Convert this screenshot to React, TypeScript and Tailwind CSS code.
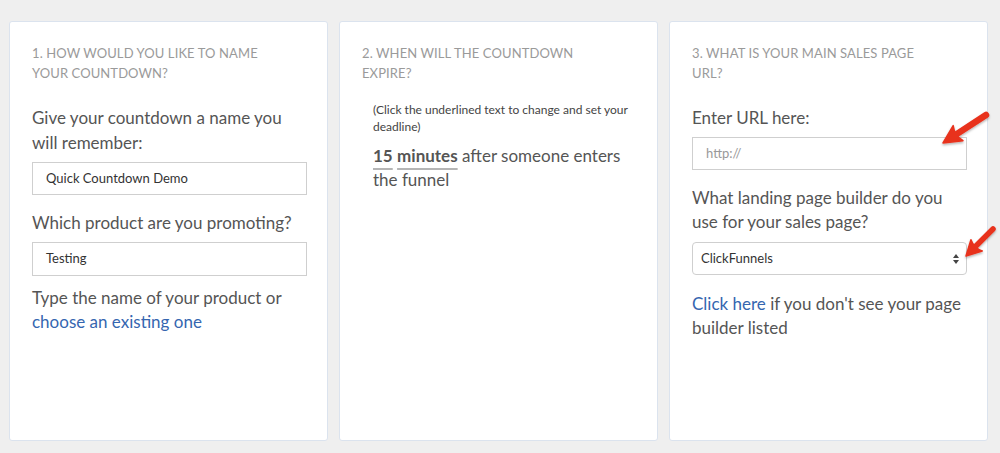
import React from "react";

function arrowShapes(tx: number, ty: number, px: number, py: number, w: number, hl: number, hw: number) {
  const dx = px - tx;
  const dy = py - ty;
  const len = Math.sqrt(dx * dx + dy * dy);
  const ux = dx / len;
  const uy = dy / len;
  const nx = -uy;
  const ny = ux;
  const bx = px - ux * hl;
  const by = py - uy * hl;
  const cx = px - ux * hl * 0.75;
  const cy = py - uy * hl * 0.75;
  const head = `M${px},${py} L${bx + (nx * hw) / 2},${by + (ny * hw) / 2} Q${cx},${cy} ${bx - (nx * hw) / 2},${by - (ny * hw) / 2} Z`;
  const shaft = `M${tx},${ty} L${cx},${cy}`;
  return { head, shaft, w };
}

function Arrows() {
  const a1 = arrowShapes(986, 115, 943, 143, 6.5, 18, 18);
  const a2 = arrowShapes(993, 229, 966, 256, 5.5, 15, 16);
  return (
    <svg className="absolute left-0 top-0 pointer-events-none" width="1000" height="453" viewBox="0 0 1000 453">
      <defs>
        <filter id="sh" x="-20%" y="-20%" width="140%" height="160%">
          <feDropShadow dx="0" dy="1.5" stdDeviation="1.2" floodColor="#000" floodOpacity="0.3" />
        </filter>
      </defs>
      {[a1, a2].map((a, i) => (
        <g key={i} filter="url(#sh)">
          <path d={a.shaft} stroke="#e8321e" strokeWidth={a.w} strokeLinecap="round" fill="none" />
          <path d={a.head} fill="#e8321e" stroke="#e8321e" strokeWidth="1.5" strokeLinejoin="round" />
        </g>
      ))}
    </svg>
  );
}

export default function App() {
  const font = { fontFamily: "Lato, 'Open Sans', sans-serif" };
  return (
    <div className="relative w-[1000px] h-[453px] bg-[#efefef] overflow-hidden" style={font}>
      <div className="flex gap-[11px] pl-[9px] pt-[21px]">
        {/* Card 1 */}
        <div className="w-[319px] h-[420px] bg-white border border-[#dbe3ee] rounded-[3px] px-[22px] pt-[21px]">
          <div className="w-[250px] text-[13px] leading-[20px] text-[#9a9a9a] uppercase tracking-[0.1px]">
            1. How would you like to name your countdown?
          </div>
          <div className="mt-[22px] text-[17px] leading-[25px] text-[#555]">
            Give your countdown a name you will remember:
          </div>
          <div className="mt-[7px] h-[33px] w-[275px] border border-[#cfcfcf] flex items-center pl-[13px] text-[13px] text-[#333]">
            Quick Countdown Demo
          </div>
          <div className="mt-[15px] text-[17px] leading-[25px] text-[#555]">Which product are you promoting?</div>
          <div className="mt-[7px] h-[34px] w-[275px] border border-[#cfcfcf] flex items-center pl-[13px] text-[13px] text-[#333]">
            Testing
          </div>
          <div className="mt-[10px] text-[17px] leading-[24px] text-[#555]">
            Type the name of your product or
            <br />
            <span className="text-[#3566b0]">choose an existing one</span>
          </div>
        </div>

        {/* Card 2 */}
        <div className="w-[319px] h-[420px] bg-white border border-[#dbe3ee] rounded-[3px] px-[22px] pt-[21px]">
          <div className="w-[250px] text-[13px] leading-[20px] text-[#9a9a9a] uppercase tracking-[0.1px]">
            2. When will the countdown expire?
          </div>
          <div className="pl-[11px]">
            <div className="mt-[18px] text-[12px] leading-[17px] text-[#444]">
              (Click the underlined text to change and set your deadline)
            </div>
            <div className="mt-[9px] text-[17px] leading-[24px] text-[#555]">
              <span className="font-bold text-[#555] underline decoration-[#b5b5b5] decoration-[1.5px] underline-offset-[6px]">15</span>{" "}
              <span className="font-bold text-[#555] underline decoration-[#b5b5b5] decoration-[1.5px] underline-offset-[6px]">minutes</span>{" "}
              after someone enters the funnel
            </div>
          </div>
        </div>

        {/* Card 3 */}
        <div className="w-[319px] h-[420px] bg-white border border-[#dbe3ee] rounded-[3px] px-[22px] pt-[21px]">
          <div className="w-[250px] text-[13px] leading-[20px] text-[#9a9a9a] uppercase tracking-[0.1px]">
            3. What is your main sales page URL?
          </div>
          <div className="mt-[22px] text-[17px] leading-[25px] text-[#555]">Enter URL here:</div>
          <div className="mt-[7px] h-[33px] w-[275px] border border-[#cfcfcf] flex items-center pl-[13px] text-[13px] text-[#999]">
            http://
          </div>
          <div className="mt-[16px] text-[17px] leading-[24px] text-[#555]">
            What landing page builder do you use for your sales page?
          </div>
          <div className="mt-[8px] h-[33px] w-[275px] border border-[#cfcfcf] rounded-[4px] flex items-center justify-between pl-[8px] pr-[6px] text-[13px] text-[#333]">
            <span>ClickFunnels</span>
            <svg width="8" height="12" viewBox="0 0 8 12">
              <path d="M4 1 L7 5 L1 5 Z" fill="#444" />
              <path d="M4 11 L7 7 L1 7 Z" fill="#444" />
            </svg>
          </div>
          <div className="mt-[17px] text-[17px] leading-[24px] text-[#555]">
            <span className="text-[#3566b0]">Click here</span> if you don't see your page builder listed
          </div>
        </div>
      </div>

      <Arrows />
    </div>
  );
}
